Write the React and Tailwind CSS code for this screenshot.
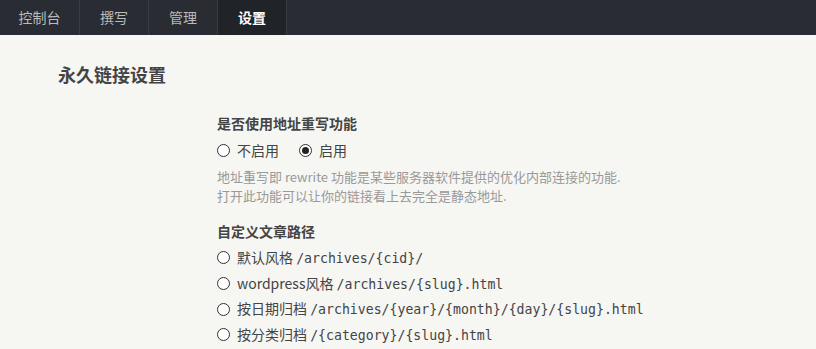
import React from "react";

const font = { fontFamily: '"Noto Sans CJK SC", "Noto Sans", sans-serif' };

function Radio({ checked }) {
  return (
    <span className="inline-flex h-[13px] w-[13px] shrink-0 items-center justify-center rounded-full border border-[#333] bg-white">
      {checked && <span className="h-[7px] w-[7px] rounded-full bg-[#222]" />}
    </span>
  );
}

const tabs = [
  { name: "控制台", w: "w-[80px]" },
  { name: "撰写", w: "w-[69px]" },
  { name: "管理", w: "w-[69px]" },
  { name: "设置", w: "w-[69px]", active: true },
];

const options = [
  { label: "默认风格", code: "/archives/{cid}/" },
  { label: "wordpress风格", code: "/archives/{slug}.html" },
  { label: "按日期归档", code: "/archives/{year}/{month}/{day}/{slug}.html" },
  { label: "按分类归档", code: "/{category}/{slug}.html" },
];

export default function App() {
  return (
    <div className="min-h-[349px] w-[816px] overflow-hidden bg-[#f6f6f3]" style={font}>
      <nav className="flex h-[35px] bg-[#292d33]">
        {tabs.map((t) => (
          <div
            key={t.name}
            className={`${t.w} flex items-center justify-center border-r border-[#383d45] text-[14px] ${
              t.active ? "bg-[#202328] font-bold text-white" : "text-[#bbbbbb]"
            }`}
          >
            {t.name}
          </div>
        ))}
      </nav>

      <div className="pl-[58px] pt-[27px]">
        <h2 className="text-[18px] font-bold leading-[24px] text-[#444]">永久链接设置</h2>
      </div>

      <div className="pl-[217px] text-[#444]">
        <div className="mt-[27px] text-[14px] font-bold leading-[20px]">是否使用地址重写功能</div>
        <div className="mt-[7px] flex items-center text-[14px] leading-[20px]">
          <label className="flex items-center gap-[7px]">
            <Radio />
            <span>不启用</span>
          </label>
          <label className="ml-[20px] flex items-center gap-[7px]">
            <Radio checked />
            <span>启用</span>
          </label>
        </div>
        <p className="mt-[7px] text-[13px] leading-[19px] text-[#999]">
          地址重写即 rewrite 功能是某些服务器软件提供的优化内部连接的功能.
          <br />
          打开此功能可以让你的链接看上去完全是静态地址.
        </p>

        <div className="mt-[16px] text-[14px] font-bold leading-[20px]">自定义文章路径</div>
        <div className="mt-[4px] flex flex-col">
          {options.map((o) => (
            <label key={o.code} className="flex h-[25.67px] items-center gap-[7px] text-[14px]">
              <Radio />
              <span>
                {o.label}{" "}
                <code className="text-[13.2px] text-[#444]" style={{ fontFamily: '"DejaVu Sans Mono", "Liberation Mono", monospace' }}>
                  {o.code}
                </code>
              </span>
            </label>
          ))}
        </div>
      </div>
    </div>
  );
}
